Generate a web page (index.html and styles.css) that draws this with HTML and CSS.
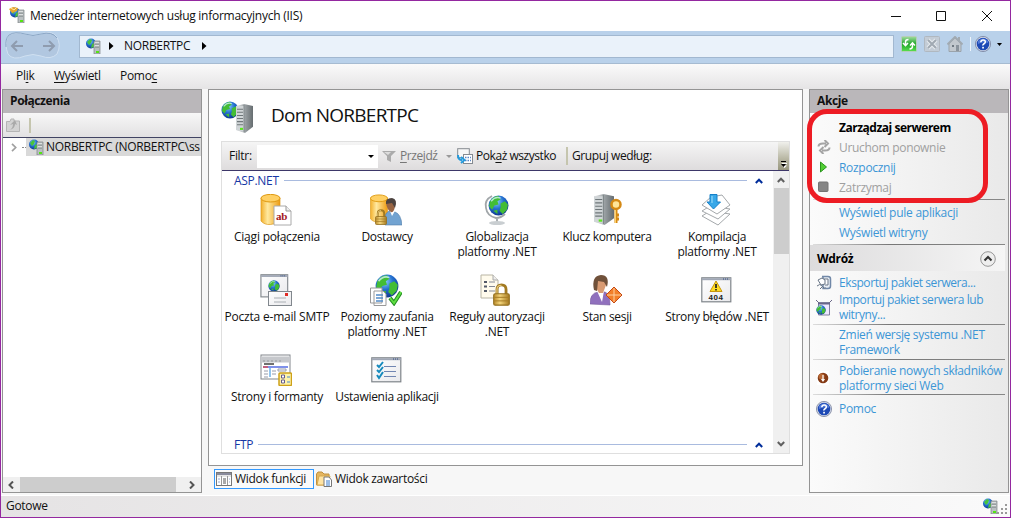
FILE: index.html
```html
<!DOCTYPE html>
<html lang="pl">
<head>
<meta charset="utf-8">
<title>Menedżer internetowych usług informacyjnych (IIS)</title>
<link rel="stylesheet" href="styles.css">
</head>
<body>
<svg class="defs" width="0" height="0">
  <defs>
    <radialGradient id="sea" cx=".4" cy=".3" r=".8"><stop offset="0" stop-color="#8fd4fa"/><stop offset=".45" stop-color="#2470d0"/><stop offset="1" stop-color="#0a2a80"/></radialGradient>
    <linearGradient id="steel"><stop offset="0" stop-color="#eceeef"/><stop offset=".5" stop-color="#9da3a6"/><stop offset="1" stop-color="#666d70"/></linearGradient>
    <linearGradient id="gold"><stop offset="0" stop-color="#f3b02c"/><stop offset=".35" stop-color="#ffe9a0"/><stop offset="1" stop-color="#ed9c12"/></linearGradient>
    <linearGradient id="brass"><stop offset="0" stop-color="#b8892a"/><stop offset=".4" stop-color="#f3d57c"/><stop offset="1" stop-color="#a67a20"/></linearGradient>
    <linearGradient id="paper" x2="1" y2="1"><stop offset="0" stop-color="#fff"/><stop offset="1" stop-color="#e9e9ec"/></linearGradient>
    <linearGradient id="greenBtn" x2="0" y2="1"><stop offset="0" stop-color="#a4dda0"/><stop offset=".5" stop-color="#20a52a"/><stop offset="1" stop-color="#5be04f"/></linearGradient>
    <symbol id="globe" viewBox="0 0 20 20">
      <circle cx="10" cy="10" r="9.5" fill="url(#sea)"/>
      <path d="M2 6Q5 1 10 1L12 4 9 6 10 9 6 10 4 14 1 11ZM12 8L16 6 19 9 18 14 14 18 11 15 12 12ZM5 15L9 14 9 18Z" fill="#43bd35"/>
      <path d="M3 6Q7 1 12 3" stroke="#d8f5ff" stroke-width="1.3" fill="none" opacity=".75"/>
    </symbol>
    <symbol id="tower" viewBox="0 0 17 28" preserveAspectRatio="none">
      <path d="M0 2L8 0 17 2V22L9 28 0 25Z" fill="url(#steel)"/><path d="M8 2V27L0 25V2Z" fill="#d0d5d7"/>
      <path d="M1 5H7M1 8H7M1 11H7M1 14H7M1 17H7M1 20H7" stroke="#6f777a"/><path d="M8 1V27" stroke="#81898b"/><rect x="4" y="23" width="3" height="2" fill="#5be51e"/>
    </symbol>
    <symbol id="server" viewBox="0 0 16 16">
      <circle cx="5" cy="5.500" r="5" fill="url(#sea)"/><path d="M1 4L4 1 6 2 5 5 3 7ZM6 6L8 5V9L5 10Z" fill="#48c43c"/>
      <path d="M8 3H14V16H8Z" fill="#b9bfc1" stroke="#7b8285" stroke-width=".7"/><path d="M8.500 5H13M8.500 8H13" stroke="#fff"/><path d="M9 6H13M9 9H13" stroke="#666e70" stroke-width=".8"/><rect x="10" y="13" width="3" height="2" fill="#54e413"/>
    </symbol>
    <symbol id="padlock" viewBox="0 0 12 16">
      <path d="M2.800 8V4.500Q2.800 1.200 6 1.200T9.200 4.500V8" fill="none" stroke="#a27a22" stroke-width="2"/><path d="M2.800 8V4.500Q2.800 1.500 6 1.500" fill="none" stroke="#ecd283" stroke-width=".8"/>
      <rect x=".5" y="7.500" width="11" height="8" rx="1" fill="url(#brass)" stroke="#94701f" stroke-width=".8"/><path d="M1 10H11M1 12.500H11" stroke="#a67c25" stroke-width=".7"/>
    </symbol>
    <symbol id="cylinder" viewBox="0 0 20 31">
      <path d="M.5 4V27Q4 31 10 30.500T19.500 27V4Z" fill="url(#gold)" stroke="#dc9a1b" stroke-width=".7"/><ellipse cx="10" cy="4.200" rx="9.500" ry="3.800" fill="#ffd064" stroke="#de980f"/>
    </symbol>
    <symbol id="help" viewBox="0 0 16 16">
      <circle cx="8" cy="8" r="7.600" fill="#d5dbe9" stroke="#6b7490" stroke-width=".7"/><circle cx="8" cy="8" r="6.300" fill="#1d49b5"/><path d="M3 5Q8 0 13 5L13 7Q8 5 3 8Z" fill="#6992e8" opacity=".7"/><path d="M5.800 6.200Q6 4 8.200 4T10.300 6Q10.300 7 9 7.800T8 9.600" fill="none" stroke="#fff" stroke-width="1.600"/><rect x="7.200" y="10.800" width="1.700" height="1.700" fill="#fff"/>
    </symbol>
    <symbol id="up" viewBox="0 0 8 6"><path d="M.8 5L4 1.700 7.200 5" fill="none" stroke="currentColor" stroke-width="2"/></symbol>
    <symbol id="window" viewBox="0 0 31 26"><rect x=".8" y=".8" width="29" height="24" fill="url(#paper)" stroke="#7f858a" stroke-width="1.200"/><path d="M1 2.200H30" stroke="#a0a7b5" stroke-width="2"/><path d="M22 2H28" stroke="#304a80" stroke-dasharray="1 1"/></symbol>
  </defs>
</svg>

<div class="window">
  <header class="titlebar">
    <svg class="app-icon" width="18" height="18" viewBox="0 0 18 18"><use href="#server" x="1" y="1" width="16" height="16"/><path d="M0 3L4 1 9 2 8 5 3 7Z" fill="#e8a52e"/><path d="M2 2L5 4 8 1" stroke="#ffe6a0" fill="none"/></svg>
    <span class="title">Menedżer internetowych usług informacyjnych (IIS)</span>
    <svg class="controls" width="102" height="12" viewBox="0 0 102 12"><path d="M0 6.500H10M45.500 1.500H54.500V10.500H45.500ZM91 1L101 11M101 1L91 11" fill="none" stroke="#111"/></svg>
  </header>

  <nav class="address">
    <svg class="history" width="56" height="28" viewBox="0 0 56 28"><path d="M8 1.500Q14-.5 20 2 28 5 36 2 46-2 51 4 57 12 52 22 46 28 36 24 28 21 20 24 8 29 3 22-1 12 3 4 5 2 8 1.500Z" fill="#b1c7e0" stroke="#d0e0f1"/><path d="M1 15Q0 7 4 3 10-1 20 2 28 5 36 2 47-1 52 6" fill="none" stroke="#8aa6c5"/><path d="M18 14H7M12 9L7 14 12 19M38 14H49M44 9L49 14 44 19" fill="none" stroke="#8f9caf" stroke-width="2"/></svg>
    <div class="path">
      <svg width="16" height="16"><use href="#server"/></svg>
      <svg class="arrow" width="5" height="8"><path d="M0 0L4.500 4 0 8Z"/></svg>
      <span class="crumb">NORBERTPC</span>
      <svg class="arrow" width="5" height="8"><path d="M0 0L4.500 4 0 8Z"/></svg>
    </div>
    <div class="nav-tools">
      <svg width="16" height="16" viewBox="0 0 16 16"><rect x=".5" y=".5" width="15" height="15" rx="1" fill="url(#greenBtn)" stroke="#b7cdbb"/><path d="M7.500 3.500Q4.500 3.500 4.500 6V9M2 7L4.500 9.700 7 7M8.500 13Q11.500 13 11.500 10V7.500M9 9.500L11.500 6.800 14 9.500" fill="none" stroke="#fff" stroke-width="1.500"/></svg>
      <svg width="16" height="16" viewBox="0 0 16 16"><rect x=".5" y=".5" width="15" height="15" rx="1" fill="#c3ccd6" stroke="#b0b8c0"/><path d="M4 4L12 12M12 4L4 12" stroke="#e6ebef" stroke-width="4"/><path d="M4 4L12 12M12 4L4 12" stroke="#a0a9b2" stroke-width="2"/></svg>
      <svg width="16" height="16" viewBox="0 0 16 16"><path d="M2 8V15.500H14V8L8 2Z" fill="#c2c8ce" stroke="#9aa3ab"/><path d="M.5 8.500L8 1 15.500 8.500M12 1V5" fill="none" stroke="#a1aab2" stroke-width="2"/><path d="M5 9H7V11H5Z" fill="#6f7982"/><path d="M9 9H12V15H9Z" fill="#8b949d"/></svg>
      <i class="divider"></i>
      <svg width="16" height="16"><use href="#help"/></svg>
      <svg class="drop" width="5" height="3"><path d="M0 0H5L2.500 3Z"/></svg>
    </div>
  </nav>

  <div class="menubar"><span class="m1">Pl<u>i</u>k</span><span class="m2"><u>W</u>yświetl</span><span class="m3">Pomo<u>c</u></span></div>

  <main class="workspace">
    <section class="panel connections">
      <h2 class="panel-title">Połączenia</h2>
      <div class="mini-toolbar"><svg width="14" height="15" viewBox="0 0 14 15"><path d="M.5 3.500H4L5 1H8V3H13.500V13.500H.5Z" fill="#d3d3d3" stroke="#b5b5b5"/><path d="M3 12Q7 11 7 6L4 7 9 2 11 7 9 6Q9 11 3 12Z" fill="#aaa"/></svg><i></i></div>
      <div class="tree">
        <svg class="chevron" width="6" height="9" viewBox="0 0 6 9"><path d="M1 .8L4.700 4.500 1 8.200" fill="none" stroke="#a0a0a0" stroke-width="1.700"/></svg>
        <i class="dots"></i>
        <div class="node"><svg width="16" height="16"><use href="#server"/></svg><span>NORBERTPC (NORBERTPC\ss</span></div>
      </div>
      <div class="hscroll"><svg width="8" height="8" viewBox="0 0 8 8"><path d="M6 .5L2.500 4 6 7.500" fill="none" stroke="#555" stroke-width="2"/></svg><i></i><svg width="8" height="8" viewBox="0 0 8 8"><path d="M2 .5L5.500 4 2 7.500" fill="none" stroke="#555" stroke-width="2"/></svg></div>
    </section>

    <div class="center">
      <section class="panel features">
        <div class="page-title"><svg width="34" height="33" viewBox="0 0 34 33"><use href="#globe" x="0" y="0" width="18" height="18"/><use href="#tower" x="15" y="3" width="17" height="29"/></svg><h1>Dom NORBERTPC</h1></div>
        <div class="frame">
          <div class="filterbar">
            <span class="filter-label">Filtr:</span>
            <div class="combo"><svg width="6" height="3"><path d="M0 0H6L3 3Z"/></svg></div>
            <svg class="funnel" width="14" height="12" viewBox="0 0 14 12"><path d="M0 1H14L9 6V12L5 10V6Z" fill="#ababab"/><path d="M2 2H9L6 5Z" fill="#ddd"/></svg>
            <span class="go"><u>P</u>rzejdź</span>
            <svg class="go-drop" width="6" height="3"><path d="M0 0H6L3 3Z" fill="#999"/></svg>
            <svg class="show-icon" width="16" height="16" viewBox="0 0 16 16"><rect x=".7" y=".7" width="11.600" height="9" fill="#f7f7f7" stroke="#858a90"/><rect x="6.500" y="6.500" width="9" height="9" fill="#fff" stroke="#858a90"/><path d="M8 9.500H14M8 12.500H14" stroke="#5985c5" stroke-width="1.500" stroke-dasharray="1.500 1"/><path d="M1 7Q1 12 5 12M4 9L7.500 12 4 15" fill="none" stroke="#249bdd" stroke-width="2"/></svg>
            <span class="show">Pok<u>a</u>ż wszystko</span>
            <i class="sep"></i>
            <span class="group">Grupuj według:</span>
            <div class="overflow"><svg width="6" height="8" viewBox="0 0 6 8"><path d="M1 5.500H6L3.500 8ZM1 3H6V4H1Z" fill="#fff"/><path d="M0 1H5V2H0ZM0 4H5L2.500 7Z"/></svg></div>
          </div>
          <div class="list">
            <div class="list-body">
              <div class="group-head asp"><span>ASP.NET</span><hr><svg width="8" height="6"><use href="#up"/></svg></div>
              <div class="grid">
                <div class="feature"><svg viewBox="0 0 32 32"><use href="#cylinder" width="21" height="31"/><path d="M14 12H26L31 17V31H14Z" fill="#fff" stroke="#aaa"/><path d="M26 12V17H31" fill="#eee" stroke="#999"/><text x="16" y="25.500" class="ab">ab</text></svg><p class="f1">Ciągi połączenia</p></div>
                <div class="feature"><svg viewBox="0 0 32 32"><use href="#cylinder" width="18" height="29"/><path d="M15 31Q13 20 19 17L25 18Q31 20 32 31Z" fill="#72a3d1" stroke="#527da9" stroke-width=".6"/><path d="M20 17L22 22 25 17Z" fill="#fff"/><path d="M16 9Q17 4 22 5 27 6 25 12 24 19 21 18 17 16 16 9Z" fill="#996544"/><path d="M16 10Q15 4 22 4 28 5 25 14L22 9Z" fill="#4c4340"/><use href="#padlock" x="5" y="15" width="12" height="16"/></svg><p class="f2">Dostawcy</p></div>
                <div class="feature"><svg viewBox="0 0 32 32"><path d="M12 2Q4 6 6 14 7 22 16 24 21 24 25 20M17 23V28" stroke="#a1a6a9" stroke-width="1.800" fill="none"/><ellipse cx="17" cy="29" rx="8" ry="2" fill="#c9ced1"/><use href="#globe" x="8" y="1" width="21" height="21"/></svg><p class="f3">Globalizacja<br>platformy .NET</p></div>
                <div class="feature"><svg viewBox="0 0 32 32"><use href="#tower" x="4" y="0" width="20" height="31"/><circle cx="26" cy="10.500" r="4.500" fill="#ffe59a" stroke="#d58915" stroke-width="2.500"/><path d="M26 16V29M26 21H29M26 25H29" stroke="#d58915" stroke-width="3"/><path d="M25.500 16V29" stroke="#ffd268"/></svg><p class="f4">Klucz komputera</p></div>
                <div class="feature"><svg viewBox="0 0 32 32"><g fill="#fff" stroke="#a4a8ab"><path d="M2 22L10 17 30 20 18 31Z"/><path d="M2 17L10 12 30 15 18 25Z"/><path d="M2 11L11 3 22 1 30 11 17 20Z"/></g><path d="M10 .5H17V8H20.500L13.500 15 7 8H10Z" fill="#38a8e8" stroke="#1680c8"/><path d="M12 2V9" stroke="#a2e0fa"/></svg><p class="f5">Kompilacja<br>platformy .NET</p></div>
                <div class="feature"><svg viewBox="0 0 32 32"><use href="#window" y="0" width="29" height="24"/><use href="#globe" x="8" y="6" width="12" height="12"/><rect x="8.500" y="17.500" width="23" height="14" fill="url(#paper)" stroke="#81878d"/><path d="M14 24H26M14 28H26" stroke="#a9aeb3"/><rect x="25" y="19" width="3" height="3" fill="#df2b25"/></svg><p class="f6">Poczta e-mail SMTP</p></div>
                <div class="feature"><svg viewBox="0 0 32 32"><use href="#globe" x="5" y="0" width="24" height="24"/><path d="M.5 14H12V29H.5ZM4 17H13L16 20V31.500H4Z" fill="#fff" stroke="#999"/><path d="M6 21H13M6 24H13M6 27H13" stroke="#518bc8" stroke-width="1.500"/><path d="M20 24L24 29 31 18" fill="none" stroke="#238b22" stroke-width="4"/><path d="M20 24L24 29 31 18" fill="none" stroke="#5fdf42" stroke-width="2"/></svg><p class="f7">Poziomy zaufania<br>platformy .NET</p></div>
                <div class="feature"><svg viewBox="0 0 32 32"><path d="M1 1H13L18 6V24H1Z" fill="#fffbed" stroke="#b9b5a4"/><path d="M13 1V6H18" fill="#eee" stroke="#aaa"/><path d="M4 8H7M4 12.500H7M4 17H7" stroke="#535968" stroke-width="2"/><path d="M9 8H15M9 12.500H15M9 17H15" stroke="#848995"/><use href="#padlock" x="13" y="9" width="17" height="23"/></svg><p class="f8">Reguły autoryzacji<br>.NET</p></div>
                <div class="feature"><svg viewBox="0 0 32 32"><path d="M0 30Q0 19 8 18L15 18Q20 20 20 31Z" fill="#9070bd" stroke="#765b9c" stroke-width=".6"/><path d="M7 17L12 28 14 17Z" fill="#fff"/><path d="M6 5Q10 1 15 4L16 11 13 19 9 19 5 12Z" fill="#d89b73"/><path d="M4 16Q1 2 11 1 20 1 17 13L14 8 8 7 7 17Z" fill="#70513a"/><path d="M24 13L32 21 24 29 16 21Z" fill="#f28029" stroke="#c64914"/><path d="M24 14V28M17 21H31" stroke="#ffd1a3"/></svg><p class="f9">Stan sesji</p></div>
                <div class="feature"><svg viewBox="0 0 32 32"><use href="#window" x="1" y="2" width="31" height="28"/><path d="M16 7L22 17.500H10Z" fill="#ffdc22" stroke="#c7960d"/><path d="M16 10V14M16 15V16.500" stroke="#222" stroke-width="1.700"/><text x="8.500" y="25.800" class="e404">404</text></svg><p class="f10">Strony błędów .NET</p></div>
                <div class="feature"><svg viewBox="0 0 32 32"><rect x="1" y="1" width="29" height="24" fill="#fff" stroke="#81868b"/><path d="M1 4H30M1 7H30" stroke="#c6c8cc" stroke-width="3"/><path d="M3 7H22" stroke="#989b9f" stroke-dasharray="2 2"/><path d="M4 10H14" stroke="#222" stroke-width="1.300"/><path d="M3 13H28" stroke="#3a55df" stroke-width="1.300"/><path d="M3 13H8" stroke="#e54545" stroke-width="1.300"/><path d="M10 14V23" stroke="#248bdd"/><path d="M4 17H8M4 20H8M4 23H8M12 17H16M12 20H16M18 15H26V17H18Z" fill="none" stroke="#979baa"/><rect x="19" y="19" width="12.500" height="12.500" rx="1" fill="#fff3a9" stroke="#cda11a" stroke-width="1.500"/><path d="M21.500 21H24.500V24H21.500ZM21.500 26H24.500V29H21.500Z" fill="#fff" stroke="#655b8d"/><path d="M27 23H30M27 28H30" stroke="#4b87d0"/></svg><p class="f11">Strony i formanty</p></div>
                <div class="feature"><svg viewBox="0 0 32 32"><use href="#window" x="1" y="2" width="31" height="28"/><path d="M14 12.500H26M14 17.500H26M14 22.500H26" stroke="#7186b2"/><path d="M7 11L9 13 13 8M7 16L9 18 13 13M7 21L9 24 13 18" fill="none" stroke="#168abd" stroke-width="2"/></svg><p class="f12">Ustawienia aplikacji</p></div>
              </div>
              <div class="group-head ftp"><span>FTP</span><hr><svg width="8" height="6"><use href="#up"/></svg></div>
            </div>
            <div class="vscroll"><svg width="8" height="6"><use href="#up"/></svg><i></i><svg class="down" width="8" height="6"><use href="#up"/></svg></div>
          </div>
        </div>
      </section>
      <div class="tabs">
        <div class="tab active"><svg width="16" height="16" viewBox="0 0 16 16"><rect x=".5" y="1.500" width="15" height="13" fill="#fff" stroke="#777"/><path d="M1 3H15" stroke="#898b9c" stroke-width="2"/><path d="M1 5H15" stroke="#ccc"/><path d="M5.500 5V14M11.500 5V14" stroke="#999"/><path d="M7 8H10M7 10H10M7 12H10" stroke="#555"/><path d="M2 8H4M2 11H4M13 8H14M13 11H14" stroke="#9aabd0"/></svg><span class="t1">Widok funkcji</span></div>
        <div class="tab"><svg width="16" height="16" viewBox="0 0 16 16"><path d="M.5 3L2 1H6L8 3H13V14H.5Z" fill="#e5b660" stroke="#c0903f"/><path d="M3 5H14L12 14H1Z" fill="#ffe4a4" stroke="#d5a94f"/><path d="M8 6H13L15.500 9V15.500H8Z" fill="#fff" stroke="#777"/><path d="M10 10H14M10 12H14M10 14H14" stroke="#3a7dcc"/></svg><span class="t2">Widok zawartości</span></div>
      </div>
    </div>

    <section class="panel actions">
      <h2 class="panel-title">Akcje</h2>
      <div class="action heading"><i></i><b>Zarządzaj serwerem</b></div>
      <div class="action disabled"><svg width="14" height="14" viewBox="0 0 14 14"><path d="M1.500 6.500Q1.500 3.500 6 3.500H9M7.500 0L11 3.500 7.500 7M12.500 7.500Q12.500 10.500 8 10.500H5M6.500 7L3 10.500 6.500 14" fill="none" stroke="#a5a5a5" stroke-width="2"/></svg><span class="a1">Uruchom ponownie</span></div>
      <div class="action"><svg width="14" height="14" viewBox="0 0 14 14"><path d="M3.500 2L9.500 7 3.500 12Z" fill="#51ce34" stroke="#2a951e"/></svg><span class="a2">Rozpocznij</span></div>
      <div class="action disabled"><svg width="14" height="14" viewBox="0 0 14 14"><rect x="1.500" y="2" width="9.500" height="9.500" rx="1" fill="#858585" stroke="#747474"/></svg><span class="a3">Zatrzymaj</span></div>
      <hr class="rule r1">
      <div class="action"><i></i><span class="a4">Wyświetl pule aplikacji</span></div>
      <div class="action"><i></i><span class="a5">Wyświetl witryny</span></div>
      <hr class="rule r2">
      <div class="deploy"><b>Wdróż</b><svg width="16" height="16" viewBox="0 0 16 16"><circle cx="8" cy="8" r="7.300" fill="#eee" stroke="#969696"/><path d="M4.500 9.500L8 6 11.500 9.500" fill="none" stroke="#333" stroke-width="2"/></svg></div>
      <div class="action export"><svg width="16" height="16" viewBox="0 0 16 16"><path d="M6 1.500H12Q14.500 1.500 14.500 4V11Q14.500 13.500 12 13.500H7V1.500" fill="#e9eef4" stroke="#7188a8" stroke-width="1.500"/><path d="M8 4H12V10H9M2 5L6 3 9 5V9L5 10ZM1 11Q4 8 6 11T10 13M4 14L7 11" fill="#fff" stroke="#687586"/></svg><span class="a6">Eksportuj pakiet serwera...</span></div>
      <div class="action two import"><svg width="16" height="17" viewBox="0 0 16 17"><path d="M2.500 4H13.500V16H2.500Z" fill="#eee9ff" stroke="#8180a0"/><path d="M2 4.500H14" stroke="#66648c" stroke-width="2"/><path d="M0 1L3 4H13L16 1" stroke="#6b6988" fill="none"/><use href="#globe" x="0" y="6" width="10" height="10"/></svg><span class="a7">Importuj pakiet serwera lub<br>witryny...</span></div>
      <hr class="rule r3">
      <div class="action two"><i></i><span class="a8">Zmień wersję systemu .NET<br>Framework</span></div>
      <hr class="rule r4">
      <div class="action two platform"><svg width="14" height="14" viewBox="0 0 14 14"><rect width="12" height="14" fill="#fff"/><circle cx="6" cy="7" r="5.300" fill="#853b16"/><circle cx="4.500" cy="5.500" r="3" fill="#b96936"/><path d="M6 4V10M4.500 8L6 10 7.500 8" stroke="#fff" stroke-width="1.200" fill="none"/></svg><span class="a9">Pobieranie nowych składników<br>platformy sieci Web</span></div>
      <hr class="rule r5">
      <div class="action help"><svg width="16" height="16"><use href="#help"/></svg><span class="a10">Pomoc</span></div>
      <div class="marker"></div>
    </section>
  </main>
  <footer class="status"><span>Gotowe</span><svg width="26" height="17" viewBox="0 0 26 17"><use href="#server" width="16" height="16"/><path d="M22 6H24V8H22ZM18 10H20V12H18ZM22 10H24V12H22ZM14 14H16V16H14ZM18 14H20V16H18ZM22 14H24V16H22Z" fill="#999"/></svg></footer>
</div>
</body>
</html>
```
FILE: styles.css
```css
* { box-sizing: border-box; }
body { margin: 0; overflow: hidden; font: 12px/15px "Open Sans", "Noto Sans", sans-serif; letter-spacing: -.3px; color: #111; }
h1, h2, p { margin: 0; font-weight: 400; }
hr { border: 0; margin: 0; }
svg { display: block; flex: none; }
i { display: block; flex: none; }
span, b { white-space: nowrap; padding-bottom: 2px; }
u { text-underline-offset: 2px; }
.defs { position: absolute; }
.window { width: 1011px; height: 518px; border: 1px solid #9428a0; background: #f7f7f7; display: flex; flex-direction: column; }
.titlebar { height: 30px; background: #fff; display: flex; align-items: center; padding-left: 8px; }
.app-icon { margin-top: -2px; }
.title { margin-left: 3px; letter-spacing: -.26px; }
.controls { margin: -1px 17px 0 auto; }
.address { height: 33px; background: #b9d1ea; border-bottom: 1px solid #a6bbd1; display: flex; padding-left: 4px; align-items: flex-start; }
.history { margin-top: 1px; }
.path { width: 815px; height: 23px; margin: 4px 0 0 18px; background: #eaf2fa; border: 1px solid #a2b8d0; display: flex; align-items: center; padding-left: 6px; }
.path svg { margin-bottom: 1px; }
.path .arrow:nth-child(2) { margin-left: 7px; }
.crumb { margin: 0 12px 0 10px; width: 66px; }
.nav-tools { display: flex; align-items: center; margin: 5px 0 0 7px; height: 16px; }
.nav-tools svg:nth-child(2), .nav-tools svg:nth-child(3) { margin-left: 7px; }
.divider { width: 1px; height: 14px; background: #eef5fc; margin: 0 4px 0 7px; }
.nav-tools .drop { margin-left: 6px; }
.menubar { height: 25px; background: linear-gradient(#fafafa, #e5e4e5); display: flex; align-items: center; padding-left: 15px; }
.menubar span { width: 38px; }
.menubar .m2 { width: 66px; }
.workspace { height: 404px; padding: 0 0 0 1px; display: grid; grid-template-columns: 200px 595px 200px; column-gap: 6px; }
.panel { border: 1px solid #949494; background: #fff; overflow: hidden; }
.panel-title { height: 23px; line-height: 22px; padding-left: 7px; background: #bab7ba; font-size: 12px; font-weight: 700; letter-spacing: -.4px; }
.connections { display: flex; flex-direction: column; }
.mini-toolbar { height: 25px; display: flex; align-items: center; padding-left: 3px; background: linear-gradient(#f7f7f7, #e2e1e2); border-bottom: 1px solid #414463; }
.mini-toolbar i { width: 2px; height: 15px; background: #c5c5ae; margin-left: 9px; }
.tree { display: flex; align-items: center; height: 18px; overflow: hidden; }
.chevron { margin-left: 8px; }
.dots { width: 4px; border-top: 1px dotted #888; margin-left: 5px; }
.node { display: flex; align-items: center; height: 18px; background: #d9d9d9; flex: none; padding-left: 3px; width: 178px; }
.node span { margin-left: 1px; letter-spacing: -.29px; }
.hscroll { height: 15px; margin-top: auto; background: #f0f0f0; display: flex; align-items: center; padding: 0 4px; }
.hscroll i { width: 156px; height: 15px; background: #cdcdcd; margin: 0 12px 0 5px; }
.features { height: 377px; padding: 0 12px 12px; }
.page-title { height: 51px; display: flex; align-items: center; }
.page-title svg { margin-top: 3px; }
h1 { font-size: 19px; line-height: 26px; margin-left: 16px; margin-top: -1px; letter-spacing: -.75px; }
.frame { width: 569px; height: 313px; border: 1px solid #dfdfdf; }
.filterbar { height: 29px; background: linear-gradient(#f5f5f5, #dedcdd); border-bottom: 1px solid #3d3769; display: flex; align-items: center; padding-left: 7px; }
.filter-label { width: 28px; }
.combo { width: 121px; height: 23px; background: #fff; display: flex; align-items: center; justify-content: flex-end; padding-right: 4px; }
.funnel { margin-left: 4px; }
.go { color: #777; margin-left: 4px; width: 46px; letter-spacing: -.42px; }
.show-icon { margin-left: 5px; }
.show { margin-left: 3px; width: 90px; letter-spacing: -.45px; }
.sep { width: 2px; height: 18px; background: #c5c5ae; margin-right: 4px; }
.group { letter-spacing: -.4px; }
.overflow { width: 11px; height: 28px; margin-left: auto; background: linear-gradient(#f0f0ec, #b8b7a3 60%, #98977f); display: flex; align-items: flex-end; justify-content: center; padding-bottom: 2px; }
.list { height: 282px; display: flex; }
.list-body { width: 551px; display: flex; flex-direction: column; }
.group-head { display: flex; align-items: center; height: 19px; color: #1737a5; padding-left: 12px; }
.group-head hr { height: 1px; background: #a9bbdf; }
.group-head svg { margin: 0 10px 0 8px; color: #002d9a; }
.asp span { width: 50px; padding: 0; }
.asp hr, .ftp hr { flex: 1; }
.ftp span { width: 24px; padding: 0; }
.ftp { margin-top: auto; margin-bottom: -1px; }
.grid { display: grid; grid-template-columns: repeat(5, 110px); grid-auto-rows: 80px; padding-top: 4px; }
.feature { display: flex; flex-direction: column; align-items: center; text-align: center; }
.feature svg { width: 32px; height: 32px; margin-right: 2px; }
.feature p { margin-top: 3px; white-space: nowrap; }
.feature .f1, .feature .f6 { letter-spacing: -.2px; }
.feature .f4 { letter-spacing: -.35px; }
.ab { font: bold 11px "Liberation Serif", serif; fill: #a21622; }
.e404 { font: bold 8px "Liberation Sans", sans-serif; fill: #222; letter-spacing: .5px; }
.vscroll { width: 16px; background: #f0f0f0; display: flex; flex-direction: column; align-items: center; color: #606060; padding-top: 6px; }
.vscroll i { width: 15px; height: 66px; background: #cdcdcd; margin-top: 5px; }
.down { transform: rotate(180deg); margin: auto 0 6px; }
.tabs { display: flex; padding: 3px 0 0 6px; }
.tab { height: 20px; display: flex; align-items: center; border: 1px solid transparent; width: 114px; padding-left: 1px; }
.tab.active { width: 100px; border-color: #3399ff; background: #fafafa; }
.tab span { margin-left: 3px; }
.actions { background: linear-gradient(90deg, #fbfbfb, #e9e9e9); overflow: visible; position: relative; }
.actions .panel-title { margin-bottom: 5px; }
.action { height: 20px; display: flex; align-items: center; padding-left: 6px; color: #3c96d6; }
.action > i, .action > svg { width: 16px; }
.action > span, .action > b { margin-left: 7px; }
.action > svg { margin-bottom: 2px; }
.heading { color: #000; letter-spacing: -.48px; }
.disabled { color: #a0a0a0; }
.rule { height: 1px; margin: 0 3px; background: linear-gradient(90deg, #ddd, #777 40%, #888); }
.r1 { margin-top: 1px; margin-bottom: 3px; }
.r2 { margin-top: 1px; }
.a4 { letter-spacing: -.25px; }
.deploy { height: 26px; display: flex; align-items: center; justify-content: space-between; padding: 2px 9px 0 7px; background: linear-gradient(90deg, #dddcdd, #f5f5f5); color: #000; margin-right: 3px; }
.export { height: 21px; margin-top: 1px; padding-top: 2px; letter-spacing: -.42px; }
.two { height: 30px; }
.import { letter-spacing: -.4px; }
.r3 { margin-top: 1px; margin-bottom: 3px; }
.r4 { margin-top: 1px; margin-bottom: 4px; }
.r5 { margin-top: 0; }
.help { height: 27px; padding-top: 2px; }
.marker { position: absolute; left: -3px; top: 19px; width: 181px; height: 94px; border: 5px solid #ed1c24; border-radius: 20px; }
.status { height: 22px; margin-top: 2px; border-top: 1px solid #fff; background: linear-gradient(90deg, #e5e3e4, #fafafa); display: flex; align-items: center; justify-content: space-between; padding: 0 1px 0 5px; }
```
